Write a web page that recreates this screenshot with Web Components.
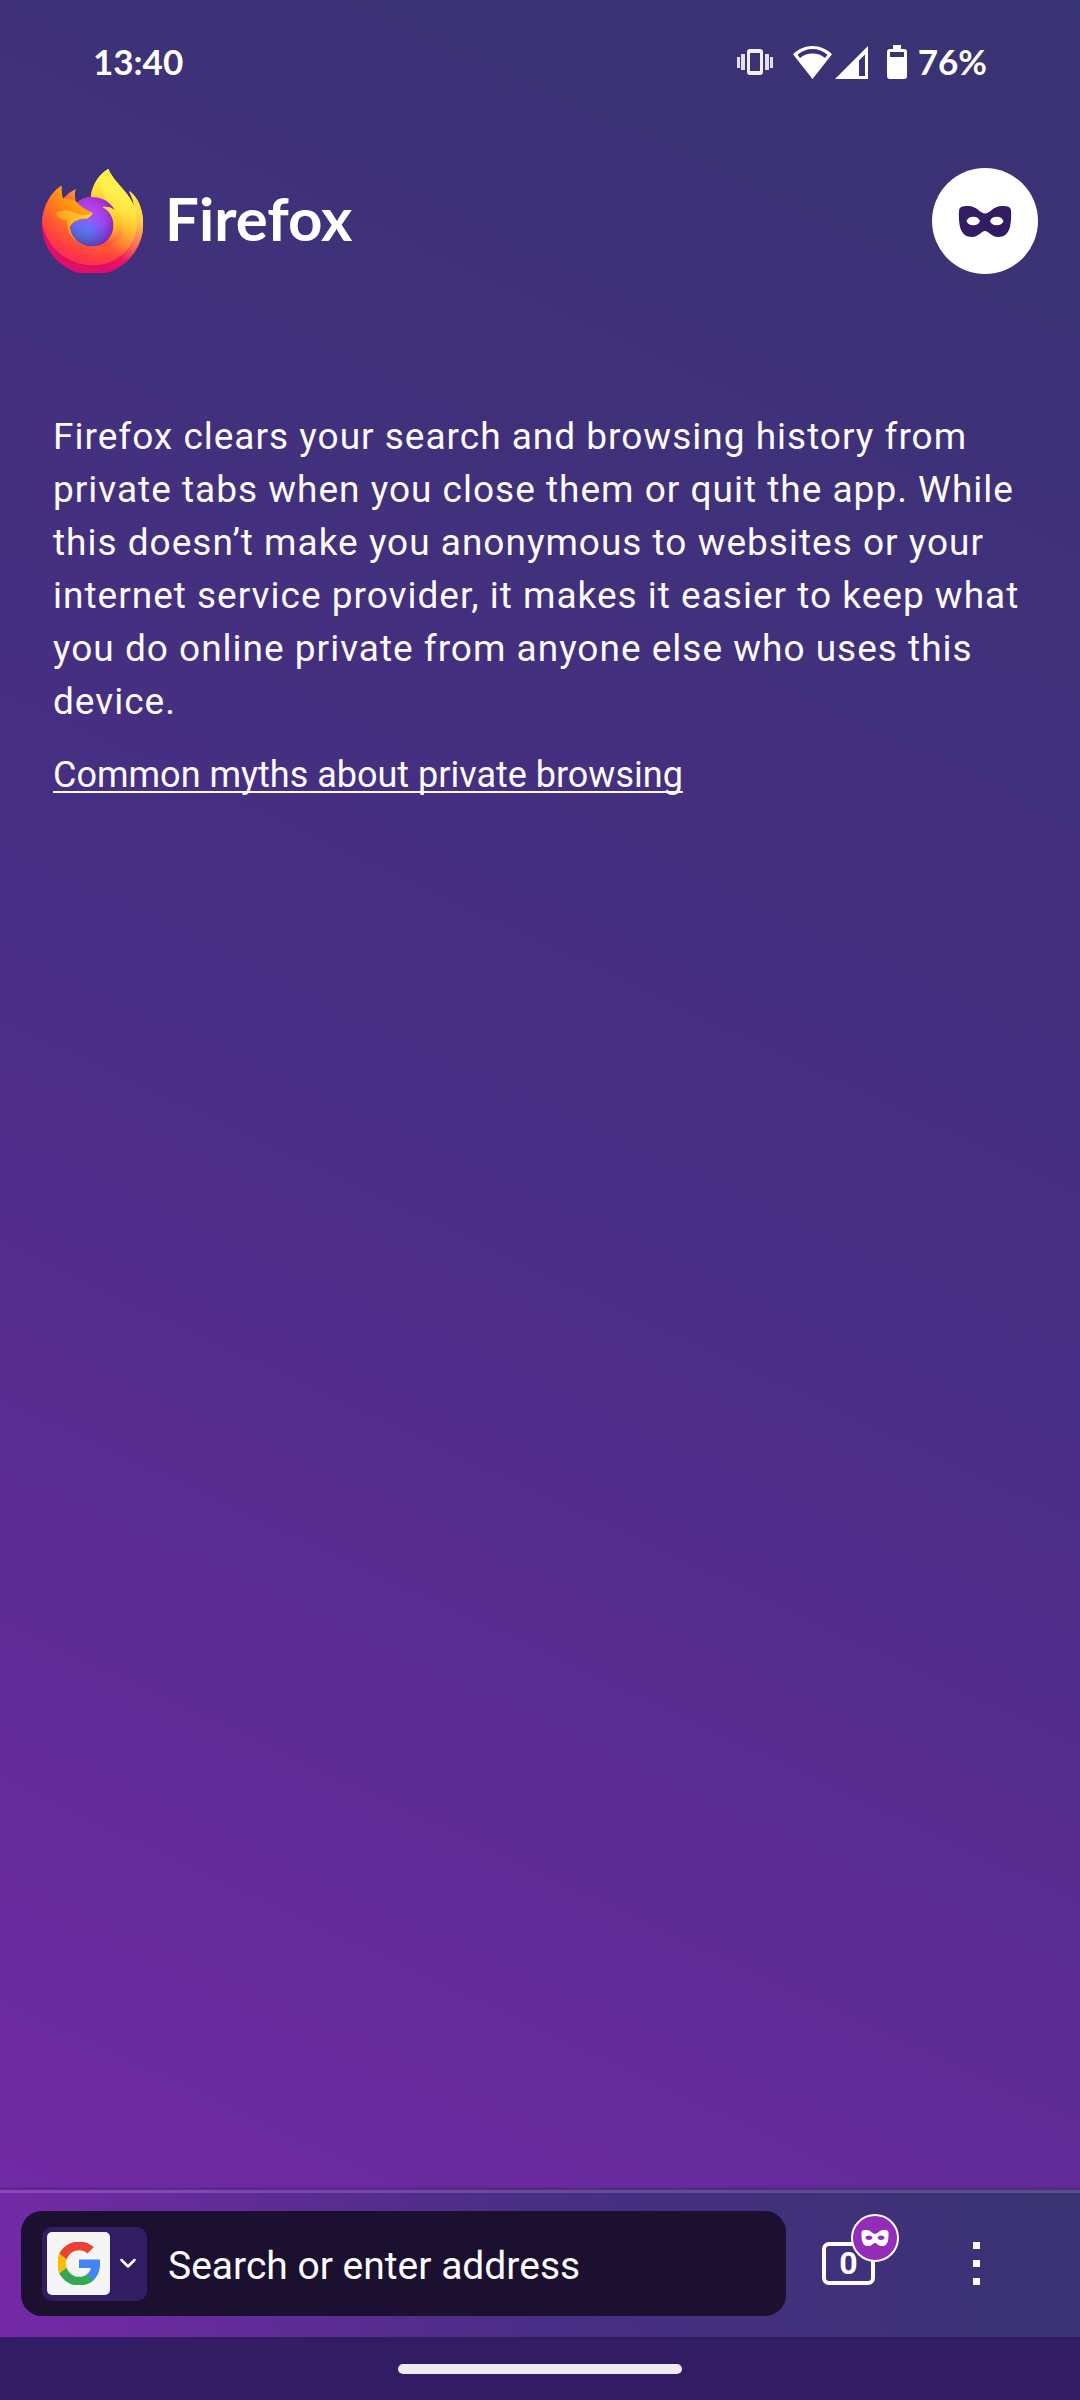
<!DOCTYPE html>
<html lang="en">
<head>
<meta charset="utf-8">
<meta name="viewport" content="width=device-width, initial-scale=1">
<title>Firefox private browsing</title>
<style>
  html, body { margin: 0; }
  body { min-height: 100vh; display: flex; flex-direction: column; background: #321c64; color: #fbfbfe; font-family: Roboto, "Noto Sans", sans-serif; }
  private-home { flex: 1; }
</style>
</head>
<body>
<private-home>
  <status-bar slot="status" time="13:40" battery="76%"></status-bar>
  <home-header slot="header">Firefox</home-header>
  <private-notice>
    Firefox clears your search and browsing history from private tabs when you close them or quit the app. While this doesn’t make you anonymous to websites or your internet service provider, it makes it easier to keep what you do online private from anyone else who uses this device.
    <a slot="link" href="#myths">Common myths about private browsing</a>
  </private-notice>
  <browser-toolbar slot="toolbar"></browser-toolbar>
</private-home>
<gesture-bar></gesture-bar>

<script>
const define = (name, html, setup) => {
  const template = document.createElement('template');
  template.innerHTML = html;
  customElements.define(name, class extends HTMLElement {
    constructor() {
      super();
      this.attachShadow({ mode: 'open' }).append(template.content.cloneNode(true));
    }
    connectedCallback() { if (setup) setup(this, this.shadowRoot); }
  });
};

define('mask-icon', `
<style>:host{display:block} svg{display:block;width:100%;height:auto}</style>
<svg viewBox="0 0 54 31" fill="currentColor" fill-rule="evenodd" aria-hidden="true">
  <path d="M1 5C1 1 4 0 10 0c9 0 12 7.500 17 7.500S35 0 44 0c6 0 9 1 9 5 .5 5 0 11-1 16-2 7-6 10-12 10-7 0-9-6-13-6s-6 6-13 6C8 31 4 28 2 21 1 16 .5 10 1 5ZM8.500 15c1 2.900 3.500 4.300 6.800 4.300s5.700-1.400 6.700-4.300c-1-2.900-3.400-4.300-6.700-4.300S9.500 12.100 8.500 15Zm23.500 0c1 2.900 3.400 4.300 6.700 4.300s5.800-1.400 6.800-4.300c-1-2.900-3.500-4.300-6.800-4.300S33 12.100 32 15Z"/>
</svg>`);

define('status-bar', `
<style>
  :host{display:flex;justify-content:space-between;align-items:center;height:84px;margin-top:20px;padding:0 93px;
    box-sizing:border-box;font:700 35px/42px Lato,"Open Sans",sans-serif;color:#fff}
  .icons{display:flex;align-items:center}
  .time,.level{padding-bottom:3px}
  svg{display:block;fill:currentColor}
  .vibrate{margin-right:19px} .wifi{margin-right:3px} .signal{margin-right:19px} .battery{margin-right:11px}
</style>
<span class="time"></span>
<div class="icons">
  <svg class="vibrate" width="38" height="34" viewBox="0 0 38 34" aria-hidden="true"><path opacity=".85" d="M1 12h3v11H1zM5 9h4v16H5zM29 9h4v16h-4zM34 12h3v11h-3z"/><path opacity=".93" fill-rule="evenodd" d="M14 4h10a3 3 0 0 1 3 3v20a3 3 0 0 1-3 3H14a3 3 0 0 1-3-3V7a3 3 0 0 1 3-3Zm0 4v18h10V8Z"/></svg>
  <svg class="wifi" width="39" height="34" viewBox="0 0 39 34" aria-hidden="true"><path fill-rule="evenodd" d="M19.500 1C12 1 5.500 4 0 9.200L19.500 34 39 9.200C33.500 4 27 1 19.500 1Zm0 3c5.500 0 10.500 2 15 5.700l-2.500 3.200C28.500 10 24 8.500 19.500 8.500S10.500 10 7 12.900L4.500 9.700C9 6 14 4 19.500 4Z"/></svg>
  <svg class="signal" width="33" height="34" viewBox="0 0 33 34" aria-hidden="true"><path fill-rule="evenodd" d="M33 1v33H0ZM30 9.500l-6 6V31h6Z"/></svg>
  <svg class="battery" width="20" height="34" viewBox="0 0 20 34" aria-hidden="true"><path fill-rule="evenodd" d="M6 0h8v4h3a3 3 0 0 1 3 3v24a3 3 0 0 1-3 3H3a3 3 0 0 1-3-3V7a3 3 0 0 1 3-3h3ZM3 7v5h14V7Z"/></svg>
  <span class="level"></span>
</div>`, (el, root) => {
  root.querySelector('.time').textContent = el.getAttribute('time');
  root.querySelector('.level').textContent = el.getAttribute('battery');
});

define('firefox-logo', `
<style>:host{display:block} svg{display:block;width:100%;height:auto}</style>
<svg viewBox="0 0 77.420 79.970" aria-hidden="true">
<defs>
<linearGradient id="a" gradientUnits="userSpaceOnUse" x1="70.800" y1="12.400" x2="6.400" y2="74.500"><stop offset=".048" stop-color="#fff44f"/><stop offset=".111" stop-color="#ffe847"/><stop offset=".225" stop-color="#ffc830"/><stop offset=".368" stop-color="#ff980e"/><stop offset=".401" stop-color="#ff8b16"/><stop offset=".462" stop-color="#ff672a"/><stop offset=".534" stop-color="#ff3647"/><stop offset=".705" stop-color="#e31587"/></linearGradient>
<radialGradient id="b" gradientUnits="userSpaceOnUse" cx="67" cy="9" r="80.800"><stop offset=".129" stop-color="#ffbd4f"/><stop offset=".186" stop-color="#ffac31"/><stop offset=".247" stop-color="#ff9d17"/><stop offset=".283" stop-color="#ff980e"/><stop offset=".403" stop-color="#ff563b"/><stop offset=".467" stop-color="#ff3750"/><stop offset=".71" stop-color="#f5156c"/><stop offset=".783" stop-color="#eb0878"/><stop offset=".86" stop-color="#e50080"/></radialGradient>
<radialGradient id="c" gradientUnits="userSpaceOnUse" cx="37" cy="42" r="80.800"><stop offset=".3" stop-color="#960e18"/><stop offset=".351" stop-color="#b11927" stop-opacity=".74"/><stop offset=".435" stop-color="#db293d" stop-opacity=".343"/><stop offset=".497" stop-color="#f5334b" stop-opacity=".094"/><stop offset=".53" stop-color="#ff3750" stop-opacity="0"/></radialGradient>
<radialGradient id="d" gradientUnits="userSpaceOnUse" cx="43.800" cy="-5" r="58.500"><stop offset=".132" stop-color="#fff44f"/><stop offset=".252" stop-color="#ffdc3e"/><stop offset=".506" stop-color="#ff9d12"/><stop offset=".526" stop-color="#ff980e"/></radialGradient>
<radialGradient id="e" gradientUnits="userSpaceOnUse" cx="28" cy="63" r="38.500"><stop offset=".353" stop-color="#3a8ee6"/><stop offset=".472" stop-color="#5c79f0"/><stop offset=".669" stop-color="#9059ff"/><stop offset="1" stop-color="#c139e6"/></radialGradient>
<radialGradient id="f" gradientUnits="userSpaceOnUse" cx="35" cy="37" r="24"><stop offset=".206" stop-color="#9059ff" stop-opacity="0"/><stop offset=".278" stop-color="#8c4ff3" stop-opacity=".064"/><stop offset=".747" stop-color="#7716a8" stop-opacity=".45"/><stop offset=".975" stop-color="#6e008b" stop-opacity=".6"/></radialGradient>
<radialGradient id="g" gradientUnits="userSpaceOnUse" cx="36" cy="6" r="27.700"><stop offset="0" stop-color="#ffe226"/><stop offset=".295" stop-color="#ffc82a"/><stop offset=".502" stop-color="#ffa930"/><stop offset=".732" stop-color="#ff7e37"/><stop offset=".792" stop-color="#ff7139"/></radialGradient>
<radialGradient id="h" gradientUnits="userSpaceOnUse" cx="58" cy="-12" r="118"><stop offset=".113" stop-color="#fff44f"/><stop offset=".456" stop-color="#ff980e"/><stop offset=".622" stop-color="#ff5634"/><stop offset=".716" stop-color="#ff3647"/><stop offset=".904" stop-color="#e31587"/></radialGradient>
<radialGradient id="i" gradientUnits="userSpaceOnUse" cx="50" cy="-5" r="100"><stop offset="0" stop-color="#fff44f"/><stop offset=".06" stop-color="#ffe847"/><stop offset=".2" stop-color="#ffe03f"/><stop offset=".38" stop-color="#ffc830"/><stop offset=".5" stop-color="#ff980e"/><stop offset=".6" stop-color="#ff672a"/></radialGradient>
<radialGradient id="j" gradientUnits="userSpaceOnUse" cx="36" cy="15" r="73.700"><stop offset=".137" stop-color="#fff44f"/><stop offset=".48" stop-color="#ff980e"/><stop offset=".592" stop-color="#ff5634"/><stop offset=".655" stop-color="#ff3647"/><stop offset=".904" stop-color="#e31587"/></radialGradient>
<radialGradient id="k" gradientUnits="userSpaceOnUse" cx="56" cy="19" r="80.700"><stop offset=".094" stop-color="#fff44f"/><stop offset=".231" stop-color="#ffe141"/><stop offset=".509" stop-color="#ffaf1e"/><stop offset=".626" stop-color="#ff980e"/></radialGradient>
<linearGradient id="l" gradientUnits="userSpaceOnUse" x1="70" y1="12" x2="15.300" y2="66.800"><stop offset=".167" stop-color="#fff44f" stop-opacity=".8"/><stop offset=".266" stop-color="#fff44f" stop-opacity=".634"/><stop offset=".489" stop-color="#fff44f" stop-opacity=".217"/><stop offset=".6" stop-color="#fff44f" stop-opacity="0"/></linearGradient>
<path id="body" d="M74.616 26.830c-1.684-4.052-5.100-8.427-7.775-9.810a40.266 40.266 0 0 1 3.925 11.764l.007.065C66.391 17.920 58.962 13.516 52.900 3.932c-.307-.485-.614-.971-.913-1.484a11.851 11.851 0 0 1-.427-.8 7.053 7.053 0 0 1-.578-1.535l-.19-.09c-9.735 5.700-13.038 16.252-13.342 21.530a19.387 19.387 0 0 0-10.666 4.111 11.587 11.587 0 0 0-1-.757 17.968 17.968 0 0 1-.109-9.473 28.705 28.705 0 0 0-9.329 7.210h-.018c-1.536-1.947-1.428-8.367-1.340-9.708a6.928 6.928 0 0 0-1.294.687 28.225 28.225 0 0 0-3.788 3.245 33.845 33.845 0 0 0-3.623 4.347 32.733 32.733 0 0 0-5.200 11.743l-.052.256A36.937 36.937 0 0 0 0 42.040v.2a38.759 38.759 0 0 0 76.954 6.554c.065-.5.118-.995.176-1.500a39.857 39.857 0 0 0-2.514-20.470Z"/>
<path id="rim" d="M74.616 26.830c-1.684-4.052-5.100-8.427-7.775-9.810a40.266 40.266 0 0 1 3.925 11.764l.014.077a35.100 35.100 0 0 1-1.206 26.158c-4.442 9.531-15.194 19.300-32.024 18.825-18.185-.515-34.200-14.009-37.194-31.683C.1 41 .2 40 .1 40L0 42.240a38.759 38.759 0 0 0 76.954 6.554c.065-.5.118-.995.176-1.500a39.857 39.857 0 0 0-2.514-20.470Z"/>
<path id="globe" d="M38.849 33.800c-.064.964-3.470 4.289-4.661 4.289-11.021 0-12.810 6.667-12.810 6.667.488 5.614 4.400 10.238 9.129 12.684.216.112.435.213.654.312q.569.252 1.138.466a17.235 17.235 0 0 0 5.043.973c19.317.906 23.059-23.100 9.119-30.066a13.380 13.380 0 0 1 9.345 2.269A19.560 19.560 0 0 0 38.826 21.470c-.46 0-.91.038-1.362.069a19.387 19.387 0 0 0-10.666 4.111c.591.5 1.258 1.168 2.663 2.553 2.630 2.591 9.375 5.275 9.390 5.590Z"/>
</defs>
<use href="#body" fill="url(#a)"/>
<use href="#rim" fill="url(#b)"/>
<use href="#rim" fill="url(#c)"/>
<path fill="url(#d)" d="M55.800 31.400c.084.059.162.118.241.177a21.100 21.100 0 0 0-3.600-4.695C40.390 14.810 49.270.730 50.790.020c-9.735 5.700-13.038 16.252-13.342 21.530.452-.031.9-.069 1.362-.069A19.560 19.560 0 0 1 55.800 31.400Z"/>
<use href="#globe" fill="url(#e)"/>
<use href="#globe" fill="url(#f)"/>
<path fill="url(#g)" d="M24.955 24.420c.314.2.573.374.8.531a17.968 17.968 0 0 1-.109-9.473 28.705 28.705 0 0 0-9.329 7.210c.189-.005 5.811-.106 8.638 1.732Z"/>
<path fill="url(#h)" d="M.354 42.159c2.991 17.674 19.009 31.168 37.194 31.683 16.830.476 27.582-9.294 32.024-18.825a35.100 35.100 0 0 0 1.206-26.158l.007-.009c1.375 8.977-3.191 17.674-10.329 23.555l-.022.050c-13.908 11.327-27.218 6.834-29.912 5q-.282-.135-.564-.281c-8.109-3.876-11.459-11.264-10.741-17.600a9.953 9.953 0 0 1-9.181-5.775 14.618 14.618 0 0 1 14.249-.572 19.300 19.300 0 0 0 14.552.572c-.015-.315-6.760-3-9.390-5.590-1.405-1.385-2.072-2.052-2.663-2.553a11.587 11.587 0 0 0-1-.758c-.23-.157-.489-.327-.8-.531-2.827-1.838-8.449-1.737-8.635-1.732h-.018c-1.536-1.947-1.428-8.367-1.340-9.708a6.928 6.928 0 0 0-1.294.687 28.225 28.225 0 0 0-3.788 3.245 33.845 33.845 0 0 0-3.638 4.337 32.733 32.733 0 0 0-5.200 11.743c-.019.079-1.396 6.099-.717 9.221Z"/>
<path fill="url(#i)" d="M52.445 26.884a21.100 21.100 0 0 1 3.600 4.695c.213.161.412.321.581.476 8.787 8.100 4.183 19.550 3.840 20.365 7.138-5.881 11.700-14.578 10.329-23.555C66.391 17.920 58.962 13.516 52.900 3.932c-.307-.485-.614-.971-.913-1.484a11.851 11.851 0 0 1-.427-.8 7.053 7.053 0 0 1-.578-1.535l-.19-.09C49.270.730 40.390 14.810 52.445 26.884Z"/>
<path fill="url(#j)" d="M56.620 32.055c-.17-.155-.37-.315-.58-.476-.08-.060-.16-.12-.24-.18a13.380 13.380 0 0 0-9.340-2.270c13.940 6.970 10.200 30.970-9.120 30.070a17.235 17.235 0 0 1-5.040-.970q-.57-.210-1.140-.470c-.22-.1-.44-.2-.65-.310l.03.020c2.690 1.840 16 6.330 29.910-5 .34-.810 4.950-12.270-3.830-20.414Z"/>
<path fill="url(#k)" d="M21.378 44.766s1.789-6.667 12.810-6.667c1.191 0 4.600-3.325 4.661-4.289a19.300 19.300 0 0 1-14.552-.572 14.618 14.618 0 0 0-14.249.572 9.953 9.953 0 0 0 9.181 5.775c-.718 6.338 2.632 13.726 10.741 17.600.181.087.351.180.537.264-4.733-2.445-8.641-7.069-9.129-12.683Z"/>
<path fill="url(#l)" d="M74.616 26.830c-1.684-4.052-5.100-8.427-7.775-9.810a40.266 40.266 0 0 1 3.925 11.764C66.391 17.920 58.962 13.516 52.900 3.932L50.790.020c-9.735 5.700-13.038 16.252-13.342 21.530A19.560 19.560 0 0 1 55.800 31.400a13.380 13.380 0 0 0-9.340-2.270c13.940 6.970 10.200 30.970-9.120 30.070-8-.4-15.300-6.200-15.960-14.430 0 0 1.790-6.670 12.810-6.670L24 33 10 34l9 6-14 20a38.759 38.759 0 0 0 71.954-11.206c.065-.5.118-.995.176-1.500a39.857 39.857 0 0 0-2.514-20.470Z"/>
</svg>`);

define('home-header', `
<style>
  :host{display:flex;justify-content:space-between;align-items:center;padding:0 42px}
  .brand{display:flex;align-items:center;gap:22px}
  firefox-logo{width:101px}
  h1{margin:0;padding-bottom:6px;font:700 60px/72px Lato,"Open Sans",sans-serif;color:#fff}
  button{width:106px;height:106px;padding:0 26px;border:0;border-radius:50%;background:#fff;color:#321c64}
</style>
<div class="brand"><firefox-logo></firefox-logo><h1><slot></slot></h1></div>
<button type="button" aria-label="Private browsing"><mask-icon></mask-icon></button>`);

define('private-notice', `
<style>
  :host{display:block;padding:0 53px;font-size:37px;line-height:53px}
  p{margin:0}
  .text{letter-spacing:1px}
  .more{margin-top:21px;font-size:36px}
  ::slotted(a){color:inherit;text-decoration:underline;text-decoration-thickness:2px;text-decoration-skip-ink:none;text-underline-offset:4px}
</style>
<p class="text"><slot></slot></p>
<p class="more"><slot name="link"></slot></p>`);

define('search-field', `
<style>
  :host{display:flex;align-items:center;gap:21px;box-sizing:border-box;height:105px;padding:0 21px;border-radius:21px;background:#1c1030}
  button{display:flex;align-items:center;gap:10px;width:105px;height:74px;padding:0 5px;box-sizing:border-box;border:0;border-radius:10px;background:#321c64;color:#fff}
  .engine{display:flex;align-items:center;justify-content:center;width:63px;height:63px;border-radius:5px;background:#f5f5f5}
  svg{display:block}
  input{flex:1;min-width:0;padding:5px 0 0;border:0;outline:0;background:none;color:#fbfbfe;font:39px/53px Roboto,"Noto Sans",sans-serif}
  input::placeholder{color:#fbfbfe;opacity:1}
</style>
<button type="button" aria-label="Choose search engine">
  <span class="engine"><svg width="42" height="43" viewBox="3 3 42 42" aria-hidden="true">
    <path fill="#4285f4" d="M45.120 24.500c0-1.560-.14-3.060-.4-4.500H24v8.510h11.840c-.51 2.750-2.060 5.080-4.390 6.640v5.520h7.110c4.160-3.830 6.560-9.470 6.560-16.170z"/>
    <path fill="#34a853" d="M24 46c5.940 0 10.920-1.970 14.560-5.330l-7.110-5.520c-1.970 1.320-4.490 2.100-7.450 2.100-5.730 0-10.580-3.870-12.310-9.070H4.340v5.700C7.960 41.070 15.400 46 24 46z"/>
    <path fill="#fbbc05" d="M11.690 28.180C11.250 26.860 11 25.450 11 24s.25-2.860.69-4.180v-5.700H4.340C2.850 17.090 2 20.450 2 24s.85 6.910 2.340 9.880l7.350-5.700z"/>
    <path fill="#ea4335" d="M24 10.750c3.230 0 6.130 1.110 8.410 3.290l6.310-6.310C34.910 4.180 29.930 2 24 2 15.400 2 7.960 6.930 4.340 14.120l7.350 5.700c1.730-5.200 6.580-9.070 12.310-9.070z"/>
  </svg></span>
  <svg width="16" height="11" viewBox="0 0 16 11" fill="none" stroke="currentColor" stroke-width="2.500" stroke-linecap="round" stroke-linejoin="round" aria-hidden="true"><path d="M1.500 2 8 8.500 14.500 2"/></svg>
</button>
<input type="text" aria-label="Search or enter address" placeholder="Search or enter address">`);

define('tab-counter', `
<style>
  :host{display:block}
  button{position:relative;display:flex;align-items:center;justify-content:center;width:53px;height:43px;padding:0;box-sizing:border-box;
    border:4px solid #fbfbfe;border-radius:7px;background:none;color:#fbfbfe;font:700 32px/35px Roboto,"Noto Sans",sans-serif}
  .badge{position:absolute;top:-32px;right:-28px;display:flex;align-items:center;justify-content:center;width:48px;height:48px;
    box-sizing:border-box;border:2px solid #fff;border-radius:50%;background:#952bb9;color:#fff}
  mask-icon{width:28px}
</style>
<button type="button" aria-label="Open tabs"><span class="count">0</span><span class="badge"><mask-icon></mask-icon></span></button>`);

define('browser-toolbar', `
<style>
  :host{display:flex;align-items:center;box-sizing:border-box;height:147px;padding:0 100px 0 21px;gap:36px;
    background:linear-gradient(#ffffff26,#ffffff26) top/100% 3px no-repeat,linear-gradient(82deg,#7529a7,#492e85 50%,#383372);
    box-shadow:0 -3px 0 #0000001a}
  search-field{flex:1}
  .actions{display:flex;align-items:center;gap:98px}
  .menu{display:flex;flex-direction:column;gap:11px;padding:0;border:0;background:none}
  .menu i{width:7px;height:7px;background:#fbfbfe}
</style>
<search-field></search-field>
<div class="actions">
  <tab-counter></tab-counter>
  <button class="menu" type="button" aria-label="Menu"><i></i><i></i><i></i></button>
</div>`);

define('private-home', `
<style>
  :host{display:flex;flex-direction:column;background:linear-gradient(25deg,#7529a7,#492e85 50%,#383372)}
  main{flex:1;padding:136px 0 53px}
  header{margin-top:64px}
</style>
<slot name="status"></slot>
<header><slot name="header"></slot></header>
<main><slot></slot></main>
<slot name="toolbar"></slot>`);

define('gesture-bar', `
<style>
  :host{display:flex;align-items:center;justify-content:center;height:63px;background:#321c64}
  span{width:284px;height:10px;border-radius:5px;background:#efebf3}
</style>
<span></span>`);
</script>
</body>
</html>
